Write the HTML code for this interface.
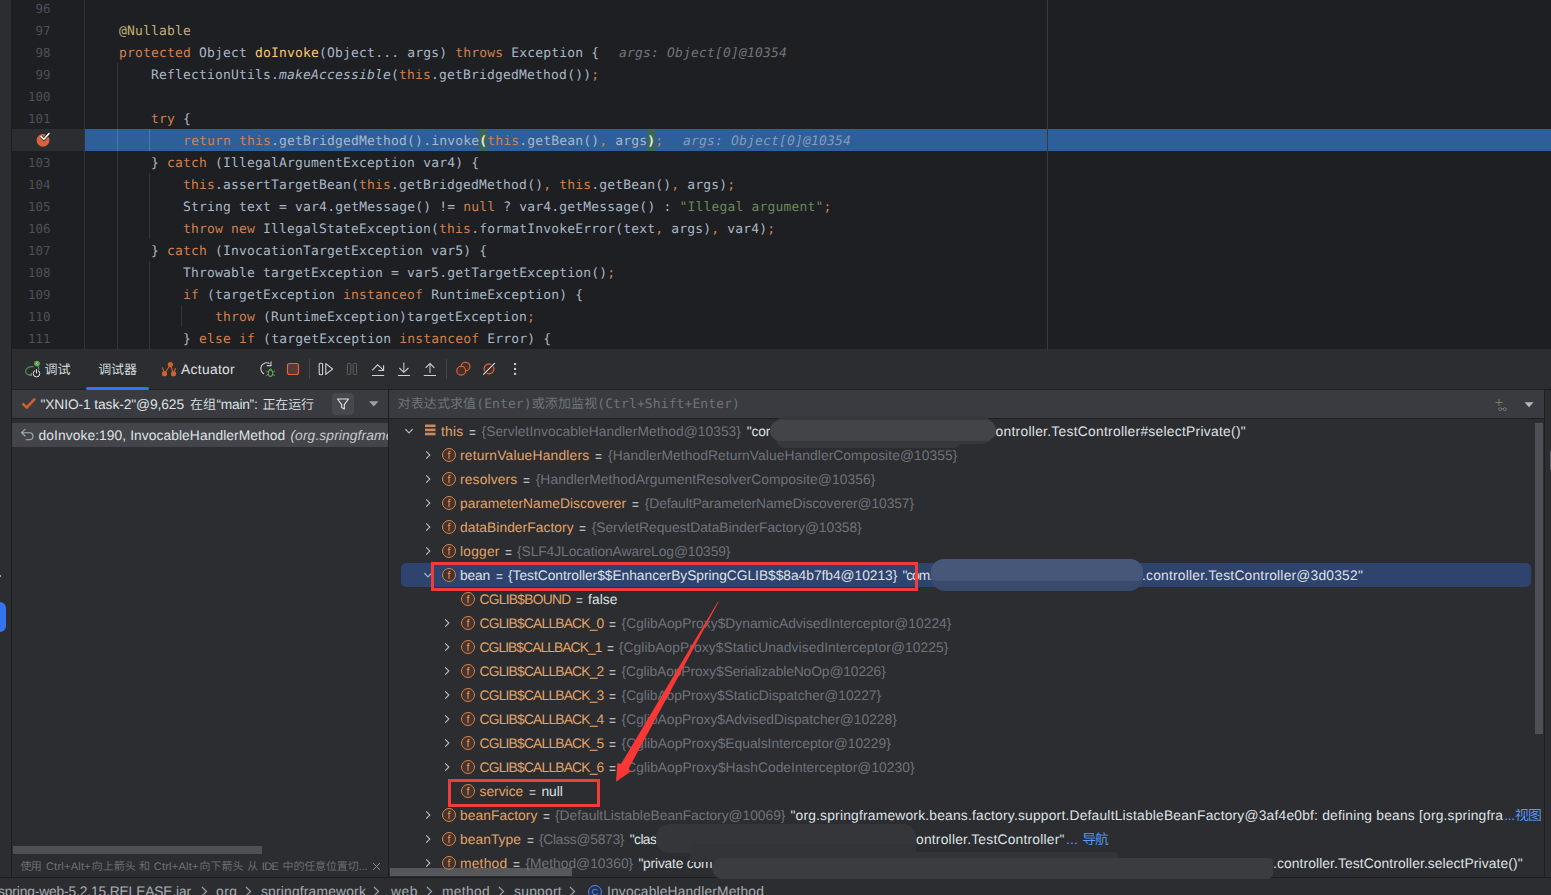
<!DOCTYPE html><html><head><meta charset=utf-8><title>debug</title><style>
html,body{margin:0;padding:0}
body{width:1551px;height:895px;overflow:hidden;background:#2b2d30;position:relative;font-family:'Liberation Sans','Noto Sans CJK SC',sans-serif;}
#editor{position:absolute;left:11px;top:0;width:1540px;height:349px;background:#1e1f22;overflow:hidden}
#editor>*{margin-left:-11px}
.cl{position:absolute;left:87px;height:22px;line-height:22px;margin-top:1.8px;white-space:pre;font-family:'DejaVu Sans Mono','Liberation Mono','Noto Sans CJK SC',monospace;font-size:13px;letter-spacing:0.1738px;text-rendering:geometricPrecision}
.ln{position:absolute;left:12px;width:38.6px;text-align:right;height:22px;line-height:22px;margin-top:0.8px;font-family:'DejaVu Sans Mono','Liberation Mono','Noto Sans CJK SC',monospace;font-size:12.5px;text-rendering:geometricPrecision;color:#4b5059}
.t{position:absolute;white-space:pre;text-rendering:geometricPrecision}
svg{overflow:visible}
</style></head><body>
<div id=editor>
<div style='position:absolute;left:12px;top:129px;width:72px;height:22px;background:#2b2d30'></div>
<div style='position:absolute;left:85px;top:129px;width:1466px;height:22px;background:#2d5f9a'></div>
<div style='position:absolute;left:479px;top:129px;width:8px;height:22px;background:#3b6852'></div>
<div style='position:absolute;left:647px;top:129px;width:8px;height:22px;background:#3b6852'></div>
<div style='position:absolute;left:84px;top:0;width:1px;height:349px;background:#313438'></div>
<div style='position:absolute;left:1047px;top:0;width:1px;height:349px;background:#393b40'></div>
<div style='position:absolute;left:117px;top:63px;width:1px;height:66px;background:#313438'></div>
<div style='position:absolute;left:117px;top:151px;width:1px;height:220px;background:#313438'></div>
<div style='position:absolute;left:117px;top:129px;width:1px;height:22px;background:#4d78ab'></div>
<div style='position:absolute;left:149px;top:129px;width:1px;height:22px;background:#4d78ab'></div>
<div style='position:absolute;left:149px;top:173px;width:1px;height:66px;background:#313438'></div>
<div style='position:absolute;left:149px;top:261px;width:1px;height:110px;background:#313438'></div>
<div style='position:absolute;left:181px;top:305px;width:1px;height:22px;background:#313438'></div>
<div class=ln style='top:-3px'>96</div>
<div class=ln style='top:19px'>97</div>
<div class=ln style='top:41px'>98</div>
<div class=ln style='top:63px'>99</div>
<div class=ln style='top:85px'>100</div>
<div class=ln style='top:107px'>101</div>
<div class=ln style='top:151px'>103</div>
<div class=ln style='top:173px'>104</div>
<div class=ln style='top:195px'>105</div>
<div class=ln style='top:217px'>106</div>
<div class=ln style='top:239px'>107</div>
<div class=ln style='top:261px'>108</div>
<div class=ln style='top:283px'>109</div>
<div class=ln style='top:305px'>110</div>
<div class=ln style='top:327px'>111</div>
<svg style='position:absolute;left:34px;top:130px' width=20 height=20 viewBox='0 0 20 20'><circle cx=9 cy=10.3 r=6.4 fill='#d9633c'/><path d='M7.2 6.6 L9.9 9.2 L15 3.6' fill=none stroke='#2b2d30' stroke-width=3.2 /><path d='M7.2 6.6 L9.9 9.2 L15 3.6' fill=none stroke='#fff' stroke-width=1.5 stroke-linecap=round stroke-linejoin=round /></svg>
<div class=cl style='top:19px'><span style='color:#a9b7c6;'>    </span><span style='color:#c0b070;'>@Nullable</span></div>
<div class=cl style='top:41px'><span style='color:#a9b7c6;'>    </span><span style='color:#d2804b;'>protected</span><span style='color:#a9b7c6;'> </span><span style='color:#a9b7c6;'>Object</span><span style='color:#a9b7c6;'> </span><span style='color:#ffc66d;'>doInvoke</span><span style='color:#a9b7c6;'>(</span><span style='color:#a9b7c6;'>Object</span><span style='color:#a9b7c6;'>.</span><span style='color:#a9b7c6;'>.</span><span style='color:#a9b7c6;'>.</span><span style='color:#a9b7c6;'> </span><span style='color:#a9b7c6;'>args</span><span style='color:#a9b7c6;'>)</span><span style='color:#a9b7c6;'> </span><span style='color:#d2804b;'>throws</span><span style='color:#a9b7c6;'> </span><span style='color:#a9b7c6;'>Exception</span><span style='color:#a9b7c6;'> </span><span style='color:#a9b7c6;'>{</span></div>
<div class=cl style='top:63px'><span style='color:#a9b7c6;'>        </span><span style='color:#a9b7c6;'>ReflectionUtils</span><span style='color:#a9b7c6;'>.</span><span style='color:#a9b7c6;font-style:italic;'>makeAccessible</span><span style='color:#a9b7c6;'>(</span><span style='color:#d2804b;'>this</span><span style='color:#a9b7c6;'>.</span><span style='color:#a9b7c6;'>getBridgedMethod</span><span style='color:#a9b7c6;'>(</span><span style='color:#a9b7c6;'>)</span><span style='color:#a9b7c6;'>)</span><span style='color:#d2804b;'>;</span></div>
<div class=cl style='top:107px'><span style='color:#a9b7c6;'>        </span><span style='color:#d2804b;'>try</span><span style='color:#a9b7c6;'> </span><span style='color:#a9b7c6;'>{</span></div>
<div class=cl style='top:129px'><span style='color:#a9b7c6;'>            </span><span style='color:#d2804b;'>return</span><span style='color:#a9b7c6;'> </span><span style='color:#d2804b;'>this</span><span style='color:#a9b7c6;'>.</span><span style='color:#a9b7c6;'>getBridgedMethod</span><span style='color:#a9b7c6;'>(</span><span style='color:#a9b7c6;'>)</span><span style='color:#a9b7c6;'>.</span><span style='color:#a9b7c6;'>invoke</span><span style='color:#e6e8ec;font-weight:bold;'>(</span><span style='color:#d2804b;'>this</span><span style='color:#a9b7c6;'>.</span><span style='color:#a9b7c6;'>getBean</span><span style='color:#a9b7c6;'>(</span><span style='color:#a9b7c6;'>)</span><span style='color:#d2804b;'>,</span><span style='color:#a9b7c6;'> </span><span style='color:#a9b7c6;'>args</span><span style='color:#e6e8ec;font-weight:bold;'>)</span><span style='color:#d2804b;'>;</span></div>
<div class=cl style='top:151px'><span style='color:#a9b7c6;'>        </span><span style='color:#a9b7c6;'>}</span><span style='color:#a9b7c6;'> </span><span style='color:#d2804b;'>catch</span><span style='color:#a9b7c6;'> </span><span style='color:#a9b7c6;'>(</span><span style='color:#a9b7c6;'>IllegalArgumentException</span><span style='color:#a9b7c6;'> </span><span style='color:#a9b7c6;'>var4</span><span style='color:#a9b7c6;'>)</span><span style='color:#a9b7c6;'> </span><span style='color:#a9b7c6;'>{</span></div>
<div class=cl style='top:173px'><span style='color:#a9b7c6;'>            </span><span style='color:#d2804b;'>this</span><span style='color:#a9b7c6;'>.</span><span style='color:#a9b7c6;'>assertTargetBean</span><span style='color:#a9b7c6;'>(</span><span style='color:#d2804b;'>this</span><span style='color:#a9b7c6;'>.</span><span style='color:#a9b7c6;'>getBridgedMethod</span><span style='color:#a9b7c6;'>(</span><span style='color:#a9b7c6;'>)</span><span style='color:#d2804b;'>,</span><span style='color:#a9b7c6;'> </span><span style='color:#d2804b;'>this</span><span style='color:#a9b7c6;'>.</span><span style='color:#a9b7c6;'>getBean</span><span style='color:#a9b7c6;'>(</span><span style='color:#a9b7c6;'>)</span><span style='color:#d2804b;'>,</span><span style='color:#a9b7c6;'> </span><span style='color:#a9b7c6;'>args</span><span style='color:#a9b7c6;'>)</span><span style='color:#d2804b;'>;</span></div>
<div class=cl style='top:195px'><span style='color:#a9b7c6;'>            </span><span style='color:#a9b7c6;'>String</span><span style='color:#a9b7c6;'> </span><span style='color:#a9b7c6;'>text</span><span style='color:#a9b7c6;'> </span><span style='color:#a9b7c6;'>=</span><span style='color:#a9b7c6;'> </span><span style='color:#a9b7c6;'>var4</span><span style='color:#a9b7c6;'>.</span><span style='color:#a9b7c6;'>getMessage</span><span style='color:#a9b7c6;'>(</span><span style='color:#a9b7c6;'>)</span><span style='color:#a9b7c6;'> </span><span style='color:#a9b7c6;'>!</span><span style='color:#a9b7c6;'>=</span><span style='color:#a9b7c6;'> </span><span style='color:#d2804b;'>null</span><span style='color:#a9b7c6;'> </span><span style='color:#a9b7c6;'>?</span><span style='color:#a9b7c6;'> </span><span style='color:#a9b7c6;'>var4</span><span style='color:#a9b7c6;'>.</span><span style='color:#a9b7c6;'>getMessage</span><span style='color:#a9b7c6;'>(</span><span style='color:#a9b7c6;'>)</span><span style='color:#a9b7c6;'> </span><span style='color:#a9b7c6;'>:</span><span style='color:#a9b7c6;'> </span><span style='color:#6a8759;'>"Illegal argument"</span><span style='color:#d2804b;'>;</span></div>
<div class=cl style='top:217px'><span style='color:#a9b7c6;'>            </span><span style='color:#d2804b;'>throw</span><span style='color:#a9b7c6;'> </span><span style='color:#d2804b;'>new</span><span style='color:#a9b7c6;'> </span><span style='color:#a9b7c6;'>IllegalStateException</span><span style='color:#a9b7c6;'>(</span><span style='color:#d2804b;'>this</span><span style='color:#a9b7c6;'>.</span><span style='color:#a9b7c6;'>formatInvokeError</span><span style='color:#a9b7c6;'>(</span><span style='color:#a9b7c6;'>text</span><span style='color:#d2804b;'>,</span><span style='color:#a9b7c6;'> </span><span style='color:#a9b7c6;'>args</span><span style='color:#a9b7c6;'>)</span><span style='color:#d2804b;'>,</span><span style='color:#a9b7c6;'> </span><span style='color:#a9b7c6;'>var4</span><span style='color:#a9b7c6;'>)</span><span style='color:#d2804b;'>;</span></div>
<div class=cl style='top:239px'><span style='color:#a9b7c6;'>        </span><span style='color:#a9b7c6;'>}</span><span style='color:#a9b7c6;'> </span><span style='color:#d2804b;'>catch</span><span style='color:#a9b7c6;'> </span><span style='color:#a9b7c6;'>(</span><span style='color:#a9b7c6;'>InvocationTargetException</span><span style='color:#a9b7c6;'> </span><span style='color:#a9b7c6;'>var5</span><span style='color:#a9b7c6;'>)</span><span style='color:#a9b7c6;'> </span><span style='color:#a9b7c6;'>{</span></div>
<div class=cl style='top:261px'><span style='color:#a9b7c6;'>            </span><span style='color:#a9b7c6;'>Throwable</span><span style='color:#a9b7c6;'> </span><span style='color:#a9b7c6;'>targetException</span><span style='color:#a9b7c6;'> </span><span style='color:#a9b7c6;'>=</span><span style='color:#a9b7c6;'> </span><span style='color:#a9b7c6;'>var5</span><span style='color:#a9b7c6;'>.</span><span style='color:#a9b7c6;'>getTargetException</span><span style='color:#a9b7c6;'>(</span><span style='color:#a9b7c6;'>)</span><span style='color:#d2804b;'>;</span></div>
<div class=cl style='top:283px'><span style='color:#a9b7c6;'>            </span><span style='color:#d2804b;'>if</span><span style='color:#a9b7c6;'> </span><span style='color:#a9b7c6;'>(</span><span style='color:#a9b7c6;'>targetException</span><span style='color:#a9b7c6;'> </span><span style='color:#d2804b;'>instanceof</span><span style='color:#a9b7c6;'> </span><span style='color:#a9b7c6;'>RuntimeException</span><span style='color:#a9b7c6;'>)</span><span style='color:#a9b7c6;'> </span><span style='color:#a9b7c6;'>{</span></div>
<div class=cl style='top:305px'><span style='color:#a9b7c6;'>                </span><span style='color:#d2804b;'>throw</span><span style='color:#a9b7c6;'> </span><span style='color:#a9b7c6;'>(</span><span style='color:#a9b7c6;'>RuntimeException</span><span style='color:#a9b7c6;'>)</span><span style='color:#a9b7c6;'>targetException</span><span style='color:#d2804b;'>;</span></div>
<div class=cl style='top:327px'><span style='color:#a9b7c6;'>            </span><span style='color:#a9b7c6;'>}</span><span style='color:#a9b7c6;'> </span><span style='color:#d2804b;'>else</span><span style='color:#a9b7c6;'> </span><span style='color:#d2804b;'>if</span><span style='color:#a9b7c6;'> </span><span style='color:#a9b7c6;'>(</span><span style='color:#a9b7c6;'>targetException</span><span style='color:#a9b7c6;'> </span><span style='color:#d2804b;'>instanceof</span><span style='color:#a9b7c6;'> </span><span style='color:#a9b7c6;'>Error</span><span style='color:#a9b7c6;'>)</span><span style='color:#a9b7c6;'> </span><span style='color:#a9b7c6;'>{</span></div>
<div class=cl style='top:41px;left:619px;color:#70747c;font-style:italic'>args: Object[0]@10354</div>
<div class=cl style='top:129px;left:683px;color:#879bb8;font-style:italic'>args: Object[0]@10354</div>
</div>
<div style='position:absolute;left:12px;top:349px;width:1539px;height:40px;background:#2b2d30'></div>
<div style='position:absolute;left:12px;top:389px;width:1539px;height:1px;background:#1e1f22'></div>
<div style='position:absolute;left:86px;top:387px;width:63px;height:3px;border-radius:2px;background:#3574f0'></div>
<span class=t style="left:44.4px;top:359.7px;line-height:20px;font-size:13px;color:#dfe1e5;font-family:'Liberation Sans','Noto Sans CJK SC',sans-serif;font-weight:350;letter-spacing:0.092px">调试</span>
<span class=t style="left:98.2px;top:359.7px;line-height:20px;font-size:13px;color:#dfe1e5;font-family:'Liberation Sans','Noto Sans CJK SC',sans-serif;font-weight:350;letter-spacing:-0.139px">调试器</span>
<span class=t style="left:181.0px;top:359.7px;line-height:20px;font-size:13.8px;color:#dfe1e5;font-family:'Liberation Sans','Noto Sans CJK SC',sans-serif;letter-spacing:0.326px">Actuator</span>
<div style='position:absolute;left:12px;top:390px;width:376px;height:28px;background:#393b40'></div>
<div style='position:absolute;left:389px;top:390px;width:1155px;height:28px;background:#393b40'></div>
<div style='position:absolute;left:12px;top:418px;width:1533px;height:1px;background:#1e1f22'></div>
<div style='position:absolute;left:388px;top:390px;width:1px;height:487px;background:#1e1f22'></div>
<div style='position:absolute;left:1544px;top:390px;width:1px;height:487px;background:#1e1f22'></div>
<div style='position:absolute;left:11px;top:349px;width:1px;height:528px;background:#1e1f22'></div>
<div style='position:absolute;left:332px;top:393px;width:22px;height:22px;border-radius:4px;background:#46484d'></div>
<svg style='position:absolute;left:335px;top:396px' width=16 height=16 viewBox='0 0 16 16'><path d='M2.5 3 H13.5 L9.3 8.6 V13 L6.7 11.6 V8.6 Z' fill=none stroke='#dfe1e5' stroke-width=1.1 stroke-linejoin=round /></svg>
<svg style='position:absolute;left:368px;top:400px' width=12 height=8 viewBox='0 0 12 8'><path d='M1 1.2 H10.5 L5.75 6.5Z' fill='#9da0a8'/></svg>
<svg style='position:absolute;left:0;top:0' width=60 height=460 viewBox='0 0 60 460'><path d='M22.5 403.5 L26.8 407.4 L35 398.6' fill=none stroke='#d35f2a' stroke-width=2.5 stroke-linejoin=miter /></svg>
<span class=t style="left:40.4px;top:394.7px;line-height:20px;font-size:13.8px;color:#dfe1e5;font-family:'Liberation Sans','Noto Sans CJK SC',sans-serif;letter-spacing:-0.102px">"XNIO-1 task-2"@9,625</span>
<span class=t style="left:190.0px;top:394.7px;line-height:20px;font-size:13px;color:#dfe1e5;font-family:'Liberation Sans','Noto Sans CJK SC',sans-serif;font-weight:350;letter-spacing:-0.008px">在组</span>
<span class=t style="left:216.5px;top:394.7px;line-height:20px;font-size:13.8px;color:#dfe1e5;font-family:'Liberation Sans','Noto Sans CJK SC',sans-serif;letter-spacing:-0.277px">“main”:</span>
<span class=t style="left:262.5px;top:394.7px;line-height:20px;font-size:13px;color:#dfe1e5;font-family:'Liberation Sans','Noto Sans CJK SC',sans-serif;font-weight:350;letter-spacing:-0.129px">正在运行</span>
<div style='position:absolute;left:12px;top:423px;width:376px;height:24px;background:#43454a'></div>
<svg style='position:absolute;left:0;top:0' width=60 height=460 viewBox='0 0 60 460'><path d='M25 429.4 L21.5 432.7 L25 436 M21.8 432.7 H29.4 A3.55 3.55 0 0 1 29.4 439.8 H26.2' fill=none stroke='#a3b2ba' stroke-width=1.1 stroke-linecap=round stroke-linejoin=round /></svg>
<span class=t style="left:38.6px;top:425.7px;line-height:20px;font-size:13.8px;color:#dfe1e5;font-family:'Liberation Sans','Noto Sans CJK SC',sans-serif;letter-spacing:0.074px">doInvoke:190, InvocableHandlerMethod</span>
<div style='position:absolute;left:286px;top:423px;width:102px;height:24px;overflow:hidden'><span class=t style="left:4.4px;top:2.7px;line-height:20px;font-size:13.8px;color:#c8cbd2;font-family:'Liberation Sans','Noto Sans CJK SC',sans-serif;font-style:italic;letter-spacing:0.115px">(org.springframework.</span></div>
<div style='position:absolute;left:13px;top:846px;width:249px;height:8px;background:#4e5056'></div>
<span class=t style="left:20.4px;top:857.0px;line-height:20px;font-size:11px;color:#6f737a;font-family:'Liberation Sans','Noto Sans CJK SC',sans-serif;font-weight:350;letter-spacing:-0.700px">使用</span>
<span class=t style="left:45.9px;top:857.0px;line-height:20px;font-size:11px;color:#6f737a;font-family:'Liberation Sans','Noto Sans CJK SC',sans-serif;letter-spacing:0.256px">Ctrl+Alt+</span>
<span class=t style="left:91.8px;top:857.0px;line-height:20px;font-size:11px;color:#6f737a;font-family:'Liberation Sans','Noto Sans CJK SC',sans-serif;font-weight:350;letter-spacing:-0.050px">向上箭头</span>
<span class=t style="left:139.0px;top:857.0px;line-height:20px;font-size:11px;color:#6f737a;font-family:'Liberation Sans','Noto Sans CJK SC',sans-serif;font-weight:350;letter-spacing:-0.600px">和</span>
<span class=t style="left:153.7px;top:857.0px;line-height:20px;font-size:11px;color:#6f737a;font-family:'Liberation Sans','Noto Sans CJK SC',sans-serif;letter-spacing:0.256px">Ctrl+Alt+</span>
<span class=t style="left:199.6px;top:857.0px;line-height:20px;font-size:11px;color:#6f737a;font-family:'Liberation Sans','Noto Sans CJK SC',sans-serif;font-weight:350;letter-spacing:-0.050px">向下箭头</span>
<span class=t style="left:247.3px;top:857.0px;line-height:20px;font-size:11px;color:#6f737a;font-family:'Liberation Sans','Noto Sans CJK SC',sans-serif;font-weight:350;letter-spacing:-0.700px">从</span>
<span class=t style="left:261.8px;top:857.0px;line-height:20px;font-size:11px;color:#6f737a;font-family:'Liberation Sans','Noto Sans CJK SC',sans-serif;letter-spacing:-0.648px">IDE</span>
<span class=t style="left:282.6px;top:857.0px;line-height:20px;font-size:11px;color:#6f737a;font-family:'Liberation Sans','Noto Sans CJK SC',sans-serif;font-weight:350;letter-spacing:-0.157px">中的任意位置切</span>
<span class=t style="left:358.8px;top:857.0px;line-height:20px;font-size:11px;color:#6f737a;font-family:'Liberation Sans','Noto Sans CJK SC',sans-serif;letter-spacing:-0.157px">...</span>
<svg style='position:absolute;left:371px;top:861px' width=11 height=11 viewBox='0 0 11 11'><path d='M2 2 L9 9 M9 2 L2 9' stroke='#868a91' stroke-width=1 fill=none /></svg>
<span class=t style="left:397.6px;top:394.7px;line-height:20px;font-size:13px;color:#6f737a;font-family:'DejaVu Sans Mono','Liberation Mono','Noto Sans CJK SC',monospace;letter-spacing:0.104px">对表达式求值(Enter)或添加监视(Ctrl+Shift+Enter)</span>
<svg style='position:absolute;left:1523px;top:401px' width=12 height=8 viewBox='0 0 12 8'><path d='M1.5 1.2 H10.5 L6 6.2Z' fill='#b4b8bf'/></svg>
<svg style='position:absolute;left:1493px;top:397.3px' width=16 height=18 viewBox='0 0 16 18'><path d='M6 2 V9 M2.5 5.5 H9.5' stroke='#7d7a66' stroke-width=1 fill=none /><circle cx=7.2 cy=12.2 r=1.5 fill=none stroke='#7d7f85' stroke-width=.8 /><circle cx=11.8 cy=12.2 r=1.5 fill=none stroke='#7d7f85' stroke-width=.8 /><path d='M8.7 11.8H10.3' stroke='#7d7f85' stroke-width=.8/></svg>
<svg style="position:absolute;left:12px;top:349px" width="520" height="40" viewBox="12 349 520 40" fill="none">
<!-- debug tab icon -->
<path d="M33.6 366.6 C29 366.2 25.6 368.4 25.6 371.2 C25.6 373.8 28 375.2 31.6 375" stroke="#4f8f55" stroke-width="1.2"/>
<path d="M28.6 375.4 L32 372.6 V376 Z" fill="#57965c"/>
<circle cx="37" cy="363.6" r="2.9" fill="#5fa04e"/>
<path d="M37.8 362.2 L36.2 363.6 L37.8 365" stroke="#d8ead2" stroke-width=".7"/>
<path d="M38.6 366.6 V369.6" stroke="#57965c" stroke-width="1.2"/>
<circle cx="36.5" cy="373.6" r="3.3" stroke="#dfe1e5" stroke-width="1" fill="#2b2d30"/>
<path d="M36.5 369 V373.4" stroke="#2b2d30" stroke-width="3"/>
<path d="M36.5 369.2 V373.4" stroke="#dfe1e5" stroke-width="1.1"/>
<!-- actuator icon -->
<path d="M164.5 373.7 L170.4 364.6 L173.5 373.7 M164.5 373.7 L162.4 367.4 M173.5 373.7 L175.6 368.2" stroke="#d0602c" stroke-width="1.1"/>
<circle cx="170.4" cy="364.6" r="2.6" fill="#d0602c"/><circle cx="164.5" cy="373.7" r="2.6" fill="#d0602c"/><circle cx="173.5" cy="373.7" r="2.6" fill="#d0602c"/>
<!-- rerun debug -->
<path d="M269.6 363.4 A5 5 0 1 0 264 373.9" stroke="#ced0d6" stroke-width="1.1"/>
<path d="M271 361.6 V365.6 H266.8" stroke="#ced0d6" stroke-width="1.1"/>
<ellipse cx="270.5" cy="373.2" rx="2.2" ry="3.2" stroke="#57a64a" stroke-width="1.1"/>
<path d="M269 370 L270.5 368.6 L272 370 M268.2 372.2 L266.2 371 M268.2 374.4 L266.2 375.6 M272.8 372.2 L274.8 371 M272.8 374.4 L274.8 375.6" stroke="#57a64a" stroke-width="1"/>
<!-- stop -->
<rect x="287.5" y="363.5" width="11" height="11" rx="2" fill="#5c3a2e" stroke="#e0693b" stroke-width="1.1"/>
<path d="M309.5 359 V379" stroke="#43454a" stroke-width="1"/>
<!-- resume -->
<rect x="319.2" y="363.3" width="3.4" height="11.4" rx="1" stroke="#ced0d6" stroke-width="1.1"/>
<path d="M325.8 363.6 L332.6 369 L325.8 374.4 Z" stroke="#ced0d6" stroke-width="1.1" stroke-linejoin="round"/>
<!-- pause (disabled) -->
<rect x="347.4" y="363.4" width="3.4" height="11.2" rx="1" stroke="#6b6759" stroke-width=".9"/>
<rect x="353.2" y="363.4" width="3.4" height="11.2" rx="1" stroke="#6b6759" stroke-width=".9"/>
<!-- step over -->
<path d="M372.2 370.4 L377.6 364.8 L383.4 370.2 M383.6 365.2 V370.5 H378.4 M372 375.5 H384.2" stroke="#ced0d6" stroke-width="1.1"/>
<!-- step into -->
<path d="M403.8 362.4 V372" stroke="#a0a2a8" stroke-width="1.4"/>
<path d="M399.4 368 L403.8 372.3 L408.4 368 M398 375.5 H410" stroke="#ced0d6" stroke-width="1.1"/>
<!-- step out -->
<path d="M430 364 V373" stroke="#a0a2a8" stroke-width="1.4"/>
<path d="M425.6 367.8 L430 363.5 L434.4 367.8 M423.8 375.5 H436" stroke="#ced0d6" stroke-width="1.1"/>
<path d="M446.5 359 V379" stroke="#43454a" stroke-width="1"/>
<!-- view breakpoints -->
<circle cx="465.5" cy="366.6" r="4.4" fill="#4a2e28" stroke="#e0693b" stroke-width="1.1"/>
<circle cx="461.2" cy="370.7" r="4.4" fill="#4a2e28" stroke="#e0693b" stroke-width="1.1"/>
<!-- mute breakpoints -->
<circle cx="489" cy="368.9" r="5" fill="#4a2e28" stroke="#e0693b" stroke-width="1.1"/>
<path d="M483.2 374.7 L494.8 363.1" stroke="#2b2d30" stroke-width="3"/>
<path d="M483.2 374.7 L494.8 363.1" stroke="#dfe1e5" stroke-width="1.1"/>
<!-- more -->
<rect x="514" y="363" width="2.1" height="2.1" fill="#b9cdd1"/><rect x="514" y="367.9" width="2.1" height="2.1" fill="#b9cdd1"/><rect x="514" y="372.8" width="2.1" height="2.1" fill="#b9cdd1"/>
</svg>

<div style='position:absolute;left:0;top:877px;width:1551px;height:18px;background:#2b2d30;border-top:1px solid #1e1f22;box-sizing:border-box'></div>
<span class=t style="left:-2.0px;top:882.4px;line-height:20px;font-size:13.8px;color:#a8adb5;font-family:'Liberation Sans','Noto Sans CJK SC',sans-serif;letter-spacing:-0.141px">spring-web-5.2.15.RELEASE.jar</span>
<span class=t style="left:216.0px;top:882.4px;line-height:20px;font-size:13.8px;color:#a8adb5;font-family:'Liberation Sans','Noto Sans CJK SC',sans-serif;letter-spacing:0.516px">org</span>
<span class=t style="left:261.0px;top:882.4px;line-height:20px;font-size:13.8px;color:#a8adb5;font-family:'Liberation Sans','Noto Sans CJK SC',sans-serif;letter-spacing:0.201px">springframework</span>
<span class=t style="left:391.0px;top:882.4px;line-height:20px;font-size:13.8px;color:#a8adb5;font-family:'Liberation Sans','Noto Sans CJK SC',sans-serif;letter-spacing:0.562px">web</span>
<span class=t style="left:442.0px;top:882.4px;line-height:20px;font-size:13.8px;color:#a8adb5;font-family:'Liberation Sans','Noto Sans CJK SC',sans-serif;letter-spacing:0.328px">method</span>
<span class=t style="left:514.0px;top:882.4px;line-height:20px;font-size:13.8px;color:#a8adb5;font-family:'Liberation Sans','Noto Sans CJK SC',sans-serif;letter-spacing:0.281px">support</span>
<span class=t style="left:607.0px;top:882.4px;line-height:20px;font-size:13.8px;color:#a8adb5;font-family:'Liberation Sans','Noto Sans CJK SC',sans-serif;letter-spacing:0.163px">InvocableHandlerMethod</span>
<svg style='position:absolute;left:199px;top:884.8px' width=10 height=12 viewBox='0 0 10 12'><path d='M3 2 L7.5 6.5 L3 11' fill=none stroke='#9da0a8' stroke-width=1.2 /></svg>
<svg style='position:absolute;left:243px;top:884.8px' width=10 height=12 viewBox='0 0 10 12'><path d='M3 2 L7.5 6.5 L3 11' fill=none stroke='#9da0a8' stroke-width=1.2 /></svg>
<svg style='position:absolute;left:371px;top:884.8px' width=10 height=12 viewBox='0 0 10 12'><path d='M3 2 L7.5 6.5 L3 11' fill=none stroke='#9da0a8' stroke-width=1.2 /></svg>
<svg style='position:absolute;left:424px;top:884.8px' width=10 height=12 viewBox='0 0 10 12'><path d='M3 2 L7.5 6.5 L3 11' fill=none stroke='#9da0a8' stroke-width=1.2 /></svg>
<svg style='position:absolute;left:496px;top:884.8px' width=10 height=12 viewBox='0 0 10 12'><path d='M3 2 L7.5 6.5 L3 11' fill=none stroke='#9da0a8' stroke-width=1.2 /></svg>
<svg style='position:absolute;left:567px;top:884.8px' width=10 height=12 viewBox='0 0 10 12'><path d='M3 2 L7.5 6.5 L3 11' fill=none stroke='#9da0a8' stroke-width=1.2 /></svg>
<svg style='position:absolute;left:587px;top:884.2px' width=16 height=16 viewBox='0 0 16 16'><circle cx=8 cy=8 r=6.5 fill='#25324d' stroke='#548af7' stroke-width=1 /><text x=8 y=11.4 text-anchor=middle font-family="'Liberation Sans',sans-serif" font-size=9.5 fill='#548af7'>C</text></svg>
<div style='position:absolute;left:401px;top:563px;width:1130px;height:24px;border-radius:5px;background:#2e436e'></div>
<svg style='position:absolute;left:401.0px;top:423.0px' width=16 height=16 viewBox='0 0 16 16'><path d='M2.5 5.5 L8 11 L13.5 5.5' fill=none stroke='#b0b3ba' stroke-width=2 stroke-linecap=round stroke-linejoin=round transform='translate(3.2 3.2) scale(0.6)'/></svg>
<svg style='position:absolute;left:424.6px;top:424.0px' width=11 height=13 viewBox='0 0 11 13'><rect x=0 y=.5 width=10.5 height=2.6 fill='#c98b5e'/><rect x=0 y=4.6 width=10.5 height=2.6 fill='#c98b5e'/><rect x=0 y=8.7 width=10.5 height=2.6 fill='#c98b5e'/></svg>
<span class=t style="left:441.0px;top:421.7px;line-height:20px;font-size:13.8px;color:#e2a36a;font-family:'Liberation Sans','Noto Sans CJK SC',sans-serif;letter-spacing:0.254px">this</span>
<span class=t style="left:468.9px;top:422.6px;line-height:20px;font-size:13.8px;color:#d3d5da;font-family:'Liberation Sans','Noto Sans CJK SC',sans-serif;transform:scaleX(.86);transform-origin:0 0;letter-spacing:0.000px">=</span>
<span class=t style="left:481.5px;top:421.7px;line-height:20px;font-size:13.8px;color:#6f737a;font-family:'Liberation Sans','Noto Sans CJK SC',sans-serif;letter-spacing:0.042px">{ServletInvocableHandlerMethod@10353}</span>
<span class=t style="left:746.7px;top:421.7px;line-height:20px;font-size:13.8px;color:#dfe1e5;font-family:'Liberation Sans','Noto Sans CJK SC',sans-serif;letter-spacing:-0.095px">"cor</span>
<span class=t style="left:995.6px;top:421.7px;line-height:20px;font-size:13.8px;color:#dfe1e5;font-family:'Liberation Sans','Noto Sans CJK SC',sans-serif;letter-spacing:0.283px">ontroller.TestController#selectPrivate()"</span>
<svg style='position:absolute;left:419.6px;top:447.0px' width=16 height=16 viewBox='0 0 16 16'><path d='M5.5 2.5 L11 8 L5.5 13.5' fill=none stroke='#b0b3ba' stroke-width=2 stroke-linecap=round stroke-linejoin=round transform='translate(3.2 3.2) scale(0.6)'/></svg>
<svg style='position:absolute;left:441.0px;top:447.0px' width=16 height=16 viewBox='0 0 16 16'><circle cx=8 cy=8 r=6.5 fill='#45322b' stroke='#d4864a' stroke-width=1 /><text x=8 y=11.6 text-anchor=middle font-family="'Liberation Sans',sans-serif" font-size=10.5 fill='#e0956a'>f</text></svg>
<span class=t style="left:460.0px;top:445.7px;line-height:20px;font-size:13.8px;color:#e2a36a;font-family:'Liberation Sans','Noto Sans CJK SC',sans-serif;letter-spacing:0.198px">returnValueHandlers</span>
<span class=t style="left:595.2px;top:446.6px;line-height:20px;font-size:13.8px;color:#d3d5da;font-family:'Liberation Sans','Noto Sans CJK SC',sans-serif;transform:scaleX(.86);transform-origin:0 0;letter-spacing:0.000px">=</span>
<span class=t style="left:608.0px;top:445.7px;line-height:20px;font-size:13.8px;color:#6f737a;font-family:'Liberation Sans','Noto Sans CJK SC',sans-serif;letter-spacing:0.074px">{HandlerMethodReturnValueHandlerComposite@10355}</span>
<svg style='position:absolute;left:419.6px;top:471.0px' width=16 height=16 viewBox='0 0 16 16'><path d='M5.5 2.5 L11 8 L5.5 13.5' fill=none stroke='#b0b3ba' stroke-width=2 stroke-linecap=round stroke-linejoin=round transform='translate(3.2 3.2) scale(0.6)'/></svg>
<svg style='position:absolute;left:441.0px;top:471.0px' width=16 height=16 viewBox='0 0 16 16'><circle cx=8 cy=8 r=6.5 fill='#45322b' stroke='#d4864a' stroke-width=1 /><text x=8 y=11.6 text-anchor=middle font-family="'Liberation Sans',sans-serif" font-size=10.5 fill='#e0956a'>f</text></svg>
<span class=t style="left:460.0px;top:469.7px;line-height:20px;font-size:13.8px;color:#e2a36a;font-family:'Liberation Sans','Noto Sans CJK SC',sans-serif;letter-spacing:0.157px">resolvers</span>
<span class=t style="left:523.2px;top:470.6px;line-height:20px;font-size:13.8px;color:#d3d5da;font-family:'Liberation Sans','Noto Sans CJK SC',sans-serif;transform:scaleX(.86);transform-origin:0 0;letter-spacing:0.000px">=</span>
<span class=t style="left:535.7px;top:469.7px;line-height:20px;font-size:13.8px;color:#6f737a;font-family:'Liberation Sans','Noto Sans CJK SC',sans-serif;letter-spacing:0.078px">{HandlerMethodArgumentResolverComposite@10356}</span>
<svg style='position:absolute;left:419.6px;top:495.0px' width=16 height=16 viewBox='0 0 16 16'><path d='M5.5 2.5 L11 8 L5.5 13.5' fill=none stroke='#b0b3ba' stroke-width=2 stroke-linecap=round stroke-linejoin=round transform='translate(3.2 3.2) scale(0.6)'/></svg>
<svg style='position:absolute;left:441.0px;top:495.0px' width=16 height=16 viewBox='0 0 16 16'><circle cx=8 cy=8 r=6.5 fill='#45322b' stroke='#d4864a' stroke-width=1 /><text x=8 y=11.6 text-anchor=middle font-family="'Liberation Sans',sans-serif" font-size=10.5 fill='#e0956a'>f</text></svg>
<span class=t style="left:460.0px;top:493.7px;line-height:20px;font-size:13.8px;color:#e2a36a;font-family:'Liberation Sans','Noto Sans CJK SC',sans-serif;letter-spacing:0.025px">parameterNameDiscoverer</span>
<span class=t style="left:632.2px;top:494.6px;line-height:20px;font-size:13.8px;color:#d3d5da;font-family:'Liberation Sans','Noto Sans CJK SC',sans-serif;transform:scaleX(.86);transform-origin:0 0;letter-spacing:0.000px">=</span>
<span class=t style="left:644.8px;top:493.7px;line-height:20px;font-size:13.8px;color:#6f737a;font-family:'Liberation Sans','Noto Sans CJK SC',sans-serif;letter-spacing:-0.086px">{DefaultParameterNameDiscoverer@10357}</span>
<svg style='position:absolute;left:419.6px;top:519.0px' width=16 height=16 viewBox='0 0 16 16'><path d='M5.5 2.5 L11 8 L5.5 13.5' fill=none stroke='#b0b3ba' stroke-width=2 stroke-linecap=round stroke-linejoin=round transform='translate(3.2 3.2) scale(0.6)'/></svg>
<svg style='position:absolute;left:441.0px;top:519.0px' width=16 height=16 viewBox='0 0 16 16'><circle cx=8 cy=8 r=6.5 fill='#45322b' stroke='#d4864a' stroke-width=1 /><text x=8 y=11.6 text-anchor=middle font-family="'Liberation Sans',sans-serif" font-size=10.5 fill='#e0956a'>f</text></svg>
<span class=t style="left:460.0px;top:517.7px;line-height:20px;font-size:13.8px;color:#e2a36a;font-family:'Liberation Sans','Noto Sans CJK SC',sans-serif;letter-spacing:0.051px">dataBinderFactory</span>
<span class=t style="left:579.2px;top:518.6px;line-height:20px;font-size:13.8px;color:#d3d5da;font-family:'Liberation Sans','Noto Sans CJK SC',sans-serif;transform:scaleX(.86);transform-origin:0 0;letter-spacing:0.000px">=</span>
<span class=t style="left:591.7px;top:517.7px;line-height:20px;font-size:13.8px;color:#6f737a;font-family:'Liberation Sans','Noto Sans CJK SC',sans-serif;letter-spacing:-0.024px">{ServletRequestDataBinderFactory@10358}</span>
<svg style='position:absolute;left:419.6px;top:543.0px' width=16 height=16 viewBox='0 0 16 16'><path d='M5.5 2.5 L11 8 L5.5 13.5' fill=none stroke='#b0b3ba' stroke-width=2 stroke-linecap=round stroke-linejoin=round transform='translate(3.2 3.2) scale(0.6)'/></svg>
<svg style='position:absolute;left:441.0px;top:543.0px' width=16 height=16 viewBox='0 0 16 16'><circle cx=8 cy=8 r=6.5 fill='#45322b' stroke='#d4864a' stroke-width=1 /><text x=8 y=11.6 text-anchor=middle font-family="'Liberation Sans',sans-serif" font-size=10.5 fill='#e0956a'>f</text></svg>
<span class=t style="left:460.0px;top:541.7px;line-height:20px;font-size:13.8px;color:#e2a36a;font-family:'Liberation Sans','Noto Sans CJK SC',sans-serif;letter-spacing:0.207px">logger</span>
<span class=t style="left:505.2px;top:542.6px;line-height:20px;font-size:13.8px;color:#d3d5da;font-family:'Liberation Sans','Noto Sans CJK SC',sans-serif;transform:scaleX(.86);transform-origin:0 0;letter-spacing:0.000px">=</span>
<span class=t style="left:517.0px;top:541.7px;line-height:20px;font-size:13.8px;color:#6f737a;font-family:'Liberation Sans','Noto Sans CJK SC',sans-serif;letter-spacing:-0.073px">{SLF4JLocationAwareLog@10359}</span>
<svg style='position:absolute;left:419.6px;top:567.0px' width=16 height=16 viewBox='0 0 16 16'><path d='M2.5 5.5 L8 11 L13.5 5.5' fill=none stroke='#b0b3ba' stroke-width=2 stroke-linecap=round stroke-linejoin=round transform='translate(3.2 3.2) scale(0.6)'/></svg>
<svg style='position:absolute;left:441.0px;top:567.0px' width=16 height=16 viewBox='0 0 16 16'><circle cx=8 cy=8 r=6.5 fill='#45322b' stroke='#d4864a' stroke-width=1 /><text x=8 y=11.6 text-anchor=middle font-family="'Liberation Sans',sans-serif" font-size=10.5 fill='#e0956a'>f</text></svg>
<span class=t style="left:460.0px;top:565.7px;line-height:20px;font-size:13.8px;color:#dfe1e5;font-family:'Liberation Sans','Noto Sans CJK SC',sans-serif;letter-spacing:-0.176px">bean</span>
<span class=t style="left:495.7px;top:566.6px;line-height:20px;font-size:13.8px;color:#dfe1e5;font-family:'Liberation Sans','Noto Sans CJK SC',sans-serif;transform:scaleX(.86);transform-origin:0 0;letter-spacing:0.000px">=</span>
<span class=t style="left:508.0px;top:565.7px;line-height:20px;font-size:13.8px;color:#dfe1e5;font-family:'Liberation Sans','Noto Sans CJK SC',sans-serif;letter-spacing:-0.038px">{TestController$$EnhancerBySpringCGLIB$$8a4b7fb4@10213}</span>
<span class=t style="left:902.4px;top:565.7px;line-height:20px;font-size:13.8px;color:#dfe1e5;font-family:'Liberation Sans','Noto Sans CJK SC',sans-serif;letter-spacing:-1.039px">"com.</span>
<span class=t style="left:1142.0px;top:565.7px;line-height:20px;font-size:13.8px;color:#dfe1e5;font-family:'Liberation Sans','Noto Sans CJK SC',sans-serif;letter-spacing:0.215px">.controller.TestController@3d0352"</span>
<svg style='position:absolute;left:460.0px;top:591.0px' width=16 height=16 viewBox='0 0 16 16'><circle cx=8 cy=8 r=6.5 fill='#45322b' stroke='#d4864a' stroke-width=1 /><text x=8 y=11.6 text-anchor=middle font-family="'Liberation Sans',sans-serif" font-size=10.5 fill='#e0956a'>f</text></svg>
<span class=t style="left:479.5px;top:589.7px;line-height:20px;font-size:13.8px;color:#e2a36a;font-family:'Liberation Sans','Noto Sans CJK SC',sans-serif;letter-spacing:-0.719px">CGLIB$BOUND</span>
<span class=t style="left:576.2px;top:590.6px;line-height:20px;font-size:13.8px;color:#d3d5da;font-family:'Liberation Sans','Noto Sans CJK SC',sans-serif;transform:scaleX(.86);transform-origin:0 0;letter-spacing:0.000px">=</span>
<span class=t style="left:588.0px;top:589.7px;line-height:20px;font-size:13.8px;color:#dfe1e5;font-family:'Liberation Sans','Noto Sans CJK SC',sans-serif;letter-spacing:0.069px">false</span>
<svg style='position:absolute;left:438.7px;top:615.0px' width=16 height=16 viewBox='0 0 16 16'><path d='M5.5 2.5 L11 8 L5.5 13.5' fill=none stroke='#b0b3ba' stroke-width=2 stroke-linecap=round stroke-linejoin=round transform='translate(3.2 3.2) scale(0.6)'/></svg>
<svg style='position:absolute;left:460.0px;top:615.0px' width=16 height=16 viewBox='0 0 16 16'><circle cx=8 cy=8 r=6.5 fill='#45322b' stroke='#d4864a' stroke-width=1 /><text x=8 y=11.6 text-anchor=middle font-family="'Liberation Sans',sans-serif" font-size=10.5 fill='#e0956a'>f</text></svg>
<span class=t style="left:479.5px;top:613.7px;line-height:20px;font-size:13.8px;color:#e2a36a;font-family:'Liberation Sans','Noto Sans CJK SC',sans-serif;letter-spacing:-0.782px">CGLIB$CALLBACK_0</span>
<span class=t style="left:609.2px;top:614.6px;line-height:20px;font-size:13.8px;color:#d3d5da;font-family:'Liberation Sans','Noto Sans CJK SC',sans-serif;transform:scaleX(.86);transform-origin:0 0;letter-spacing:0.000px">=</span>
<span class=t style="left:621.6px;top:613.7px;line-height:20px;font-size:13.8px;color:#6f737a;font-family:'Liberation Sans','Noto Sans CJK SC',sans-serif;letter-spacing:0.012px">{CglibAopProxy$DynamicAdvisedInterceptor@10224}</span>
<svg style='position:absolute;left:438.7px;top:639.0px' width=16 height=16 viewBox='0 0 16 16'><path d='M5.5 2.5 L11 8 L5.5 13.5' fill=none stroke='#b0b3ba' stroke-width=2 stroke-linecap=round stroke-linejoin=round transform='translate(3.2 3.2) scale(0.6)'/></svg>
<svg style='position:absolute;left:460.0px;top:639.0px' width=16 height=16 viewBox='0 0 16 16'><circle cx=8 cy=8 r=6.5 fill='#45322b' stroke='#d4864a' stroke-width=1 /><text x=8 y=11.6 text-anchor=middle font-family="'Liberation Sans',sans-serif" font-size=10.5 fill='#e0956a'>f</text></svg>
<span class=t style="left:479.5px;top:637.7px;line-height:20px;font-size:13.8px;color:#e2a36a;font-family:'Liberation Sans','Noto Sans CJK SC',sans-serif;letter-spacing:-0.907px">CGLIB$CALLBACK_1</span>
<span class=t style="left:607.2px;top:638.6px;line-height:20px;font-size:13.8px;color:#d3d5da;font-family:'Liberation Sans','Noto Sans CJK SC',sans-serif;transform:scaleX(.86);transform-origin:0 0;letter-spacing:0.000px">=</span>
<span class=t style="left:618.8px;top:637.7px;line-height:20px;font-size:13.8px;color:#6f737a;font-family:'Liberation Sans','Noto Sans CJK SC',sans-serif;letter-spacing:0.071px">{CglibAopProxy$StaticUnadvisedInterceptor@10225}</span>
<svg style='position:absolute;left:438.7px;top:663.0px' width=16 height=16 viewBox='0 0 16 16'><path d='M5.5 2.5 L11 8 L5.5 13.5' fill=none stroke='#b0b3ba' stroke-width=2 stroke-linecap=round stroke-linejoin=round transform='translate(3.2 3.2) scale(0.6)'/></svg>
<svg style='position:absolute;left:460.0px;top:663.0px' width=16 height=16 viewBox='0 0 16 16'><circle cx=8 cy=8 r=6.5 fill='#45322b' stroke='#d4864a' stroke-width=1 /><text x=8 y=11.6 text-anchor=middle font-family="'Liberation Sans',sans-serif" font-size=10.5 fill='#e0956a'>f</text></svg>
<span class=t style="left:479.5px;top:661.7px;line-height:20px;font-size:13.8px;color:#e2a36a;font-family:'Liberation Sans','Noto Sans CJK SC',sans-serif;letter-spacing:-0.782px">CGLIB$CALLBACK_2</span>
<span class=t style="left:609.2px;top:662.6px;line-height:20px;font-size:13.8px;color:#d3d5da;font-family:'Liberation Sans','Noto Sans CJK SC',sans-serif;transform:scaleX(.86);transform-origin:0 0;letter-spacing:0.000px">=</span>
<span class=t style="left:621.6px;top:661.7px;line-height:20px;font-size:13.8px;color:#6f737a;font-family:'Liberation Sans','Noto Sans CJK SC',sans-serif;letter-spacing:-0.100px">{CglibAopProxy$SerializableNoOp@10226}</span>
<svg style='position:absolute;left:438.7px;top:687.0px' width=16 height=16 viewBox='0 0 16 16'><path d='M5.5 2.5 L11 8 L5.5 13.5' fill=none stroke='#b0b3ba' stroke-width=2 stroke-linecap=round stroke-linejoin=round transform='translate(3.2 3.2) scale(0.6)'/></svg>
<svg style='position:absolute;left:460.0px;top:687.0px' width=16 height=16 viewBox='0 0 16 16'><circle cx=8 cy=8 r=6.5 fill='#45322b' stroke='#d4864a' stroke-width=1 /><text x=8 y=11.6 text-anchor=middle font-family="'Liberation Sans',sans-serif" font-size=10.5 fill='#e0956a'>f</text></svg>
<span class=t style="left:479.5px;top:685.7px;line-height:20px;font-size:13.8px;color:#e2a36a;font-family:'Liberation Sans','Noto Sans CJK SC',sans-serif;letter-spacing:-0.782px">CGLIB$CALLBACK_3</span>
<span class=t style="left:609.2px;top:686.6px;line-height:20px;font-size:13.8px;color:#d3d5da;font-family:'Liberation Sans','Noto Sans CJK SC',sans-serif;transform:scaleX(.86);transform-origin:0 0;letter-spacing:0.000px">=</span>
<span class=t style="left:621.6px;top:685.7px;line-height:20px;font-size:13.8px;color:#6f737a;font-family:'Liberation Sans','Noto Sans CJK SC',sans-serif;letter-spacing:-0.041px">{CglibAopProxy$StaticDispatcher@10227}</span>
<svg style='position:absolute;left:438.7px;top:711.0px' width=16 height=16 viewBox='0 0 16 16'><path d='M5.5 2.5 L11 8 L5.5 13.5' fill=none stroke='#b0b3ba' stroke-width=2 stroke-linecap=round stroke-linejoin=round transform='translate(3.2 3.2) scale(0.6)'/></svg>
<svg style='position:absolute;left:460.0px;top:711.0px' width=16 height=16 viewBox='0 0 16 16'><circle cx=8 cy=8 r=6.5 fill='#45322b' stroke='#d4864a' stroke-width=1 /><text x=8 y=11.6 text-anchor=middle font-family="'Liberation Sans',sans-serif" font-size=10.5 fill='#e0956a'>f</text></svg>
<span class=t style="left:479.5px;top:709.7px;line-height:20px;font-size:13.8px;color:#e2a36a;font-family:'Liberation Sans','Noto Sans CJK SC',sans-serif;letter-spacing:-0.782px">CGLIB$CALLBACK_4</span>
<span class=t style="left:609.2px;top:710.6px;line-height:20px;font-size:13.8px;color:#d3d5da;font-family:'Liberation Sans','Noto Sans CJK SC',sans-serif;transform:scaleX(.86);transform-origin:0 0;letter-spacing:0.000px">=</span>
<span class=t style="left:621.6px;top:709.7px;line-height:20px;font-size:13.8px;color:#6f737a;font-family:'Liberation Sans','Noto Sans CJK SC',sans-serif;letter-spacing:-0.009px">{CglibAopProxy$AdvisedDispatcher@10228}</span>
<svg style='position:absolute;left:438.7px;top:735.0px' width=16 height=16 viewBox='0 0 16 16'><path d='M5.5 2.5 L11 8 L5.5 13.5' fill=none stroke='#b0b3ba' stroke-width=2 stroke-linecap=round stroke-linejoin=round transform='translate(3.2 3.2) scale(0.6)'/></svg>
<svg style='position:absolute;left:460.0px;top:735.0px' width=16 height=16 viewBox='0 0 16 16'><circle cx=8 cy=8 r=6.5 fill='#45322b' stroke='#d4864a' stroke-width=1 /><text x=8 y=11.6 text-anchor=middle font-family="'Liberation Sans',sans-serif" font-size=10.5 fill='#e0956a'>f</text></svg>
<span class=t style="left:479.5px;top:733.7px;line-height:20px;font-size:13.8px;color:#e2a36a;font-family:'Liberation Sans','Noto Sans CJK SC',sans-serif;letter-spacing:-0.782px">CGLIB$CALLBACK_5</span>
<span class=t style="left:609.2px;top:734.6px;line-height:20px;font-size:13.8px;color:#d3d5da;font-family:'Liberation Sans','Noto Sans CJK SC',sans-serif;transform:scaleX(.86);transform-origin:0 0;letter-spacing:0.000px">=</span>
<span class=t style="left:621.6px;top:733.7px;line-height:20px;font-size:13.8px;color:#6f737a;font-family:'Liberation Sans','Noto Sans CJK SC',sans-serif;letter-spacing:0.014px">{CglibAopProxy$EqualsInterceptor@10229}</span>
<svg style='position:absolute;left:438.7px;top:759.0px' width=16 height=16 viewBox='0 0 16 16'><path d='M5.5 2.5 L11 8 L5.5 13.5' fill=none stroke='#b0b3ba' stroke-width=2 stroke-linecap=round stroke-linejoin=round transform='translate(3.2 3.2) scale(0.6)'/></svg>
<svg style='position:absolute;left:460.0px;top:759.0px' width=16 height=16 viewBox='0 0 16 16'><circle cx=8 cy=8 r=6.5 fill='#45322b' stroke='#d4864a' stroke-width=1 /><text x=8 y=11.6 text-anchor=middle font-family="'Liberation Sans',sans-serif" font-size=10.5 fill='#e0956a'>f</text></svg>
<span class=t style="left:479.5px;top:757.7px;line-height:20px;font-size:13.8px;color:#e2a36a;font-family:'Liberation Sans','Noto Sans CJK SC',sans-serif;letter-spacing:-0.782px">CGLIB$CALLBACK_6</span>
<span class=t style="left:609.2px;top:758.6px;line-height:20px;font-size:13.8px;color:#d3d5da;font-family:'Liberation Sans','Noto Sans CJK SC',sans-serif;transform:scaleX(.86);transform-origin:0 0;letter-spacing:0.000px">=</span>
<span class=t style="left:621.6px;top:757.7px;line-height:20px;font-size:13.8px;color:#6f737a;font-family:'Liberation Sans','Noto Sans CJK SC',sans-serif;letter-spacing:0.032px">{CglibAopProxy$HashCodeInterceptor@10230}</span>
<svg style='position:absolute;left:460.0px;top:783.0px' width=16 height=16 viewBox='0 0 16 16'><circle cx=8 cy=8 r=6.5 fill='#45322b' stroke='#d4864a' stroke-width=1 /><text x=8 y=11.6 text-anchor=middle font-family="'Liberation Sans',sans-serif" font-size=10.5 fill='#e0956a'>f</text></svg>
<span class=t style="left:479.5px;top:781.7px;line-height:20px;font-size:13.8px;color:#e2a36a;font-family:'Liberation Sans','Noto Sans CJK SC',sans-serif;letter-spacing:0.014px">service</span>
<span class=t style="left:529.2px;top:782.6px;line-height:20px;font-size:13.8px;color:#d3d5da;font-family:'Liberation Sans','Noto Sans CJK SC',sans-serif;transform:scaleX(.86);transform-origin:0 0;letter-spacing:0.000px">=</span>
<span class=t style="left:541.4px;top:781.7px;line-height:20px;font-size:13.8px;color:#dfe1e5;font-family:'Liberation Sans','Noto Sans CJK SC',sans-serif;letter-spacing:-0.021px">null</span>
<svg style='position:absolute;left:419.6px;top:807.0px' width=16 height=16 viewBox='0 0 16 16'><path d='M5.5 2.5 L11 8 L5.5 13.5' fill=none stroke='#b0b3ba' stroke-width=2 stroke-linecap=round stroke-linejoin=round transform='translate(3.2 3.2) scale(0.6)'/></svg>
<svg style='position:absolute;left:441.0px;top:807.0px' width=16 height=16 viewBox='0 0 16 16'><circle cx=8 cy=8 r=6.5 fill='#45322b' stroke='#d4864a' stroke-width=1 /><text x=8 y=11.6 text-anchor=middle font-family="'Liberation Sans',sans-serif" font-size=10.5 fill='#e0956a'>f</text></svg>
<span class=t style="left:460.0px;top:805.7px;line-height:20px;font-size:13.8px;color:#e2a36a;font-family:'Liberation Sans','Noto Sans CJK SC',sans-serif;letter-spacing:0.072px">beanFactory</span>
<span class=t style="left:543.2px;top:806.6px;line-height:20px;font-size:13.8px;color:#d3d5da;font-family:'Liberation Sans','Noto Sans CJK SC',sans-serif;transform:scaleX(.86);transform-origin:0 0;letter-spacing:0.000px">=</span>
<span class=t style="left:555.0px;top:805.7px;line-height:20px;font-size:13.8px;color:#6f737a;font-family:'Liberation Sans','Noto Sans CJK SC',sans-serif;letter-spacing:-0.020px">{DefaultListableBeanFactory@10069}</span>
<span class=t style="left:790.4px;top:805.7px;line-height:20px;font-size:13.8px;color:#dfe1e5;font-family:'Liberation Sans','Noto Sans CJK SC',sans-serif;letter-spacing:0.212px">"org.springframework.beans.factory.support.DefaultListableBeanFactory@3af4e0bf: defining beans [org.springfra</span>
<span class=t style="left:1504.3px;top:805.7px;line-height:20px;font-size:13.8px;color:#5a9cf8;font-family:'Liberation Sans','Noto Sans CJK SC',sans-serif;letter-spacing:-0.400px">...</span>
<span class=t style="left:1515.0px;top:805.7px;line-height:20px;font-size:13.8px;color:#5a9cf8;font-family:'Liberation Sans','Noto Sans CJK SC',sans-serif;font-weight:350;letter-spacing:-0.797px">视图</span>
<svg style='position:absolute;left:419.6px;top:831.0px' width=16 height=16 viewBox='0 0 16 16'><path d='M5.5 2.5 L11 8 L5.5 13.5' fill=none stroke='#b0b3ba' stroke-width=2 stroke-linecap=round stroke-linejoin=round transform='translate(3.2 3.2) scale(0.6)'/></svg>
<svg style='position:absolute;left:441.0px;top:831.0px' width=16 height=16 viewBox='0 0 16 16'><circle cx=8 cy=8 r=6.5 fill='#45322b' stroke='#d4864a' stroke-width=1 /><text x=8 y=11.6 text-anchor=middle font-family="'Liberation Sans',sans-serif" font-size=10.5 fill='#e0956a'>f</text></svg>
<span class=t style="left:460.0px;top:829.7px;line-height:20px;font-size:13.8px;color:#e2a36a;font-family:'Liberation Sans','Noto Sans CJK SC',sans-serif;letter-spacing:0.049px">beanType</span>
<span class=t style="left:526.7px;top:830.6px;line-height:20px;font-size:13.8px;color:#d3d5da;font-family:'Liberation Sans','Noto Sans CJK SC',sans-serif;transform:scaleX(.86);transform-origin:0 0;letter-spacing:0.000px">=</span>
<span class=t style="left:539.0px;top:829.7px;line-height:20px;font-size:13.8px;color:#6f737a;font-family:'Liberation Sans','Noto Sans CJK SC',sans-serif;letter-spacing:-0.268px">{Class@5873}</span>
<span class=t style="left:629.8px;top:829.7px;line-height:20px;font-size:13.8px;color:#dfe1e5;font-family:'Liberation Sans','Noto Sans CJK SC',sans-serif;letter-spacing:-0.607px">"clas</span>
<span class=t style="left:916.0px;top:829.7px;line-height:20px;font-size:13.8px;color:#dfe1e5;font-family:'Liberation Sans','Noto Sans CJK SC',sans-serif;letter-spacing:0.231px">ontroller.TestController"</span>
<span class=t style="left:1066.0px;top:829.7px;line-height:20px;font-size:13.8px;color:#5a9cf8;font-family:'Liberation Sans','Noto Sans CJK SC',sans-serif;letter-spacing:0.167px">...</span>
<span class=t style="left:1082.2px;top:829.7px;line-height:20px;font-size:13.8px;color:#5a9cf8;font-family:'Liberation Sans','Noto Sans CJK SC',sans-serif;font-weight:350;letter-spacing:-0.997px">导航</span>
<svg style='position:absolute;left:419.6px;top:855.0px' width=16 height=16 viewBox='0 0 16 16'><path d='M5.5 2.5 L11 8 L5.5 13.5' fill=none stroke='#b0b3ba' stroke-width=2 stroke-linecap=round stroke-linejoin=round transform='translate(3.2 3.2) scale(0.6)'/></svg>
<svg style='position:absolute;left:441.0px;top:855.0px' width=16 height=16 viewBox='0 0 16 16'><circle cx=8 cy=8 r=6.5 fill='#45322b' stroke='#d4864a' stroke-width=1 /><text x=8 y=11.6 text-anchor=middle font-family="'Liberation Sans',sans-serif" font-size=10.5 fill='#e0956a'>f</text></svg>
<span class=t style="left:460.0px;top:853.7px;line-height:20px;font-size:13.8px;color:#e2a36a;font-family:'Liberation Sans','Noto Sans CJK SC',sans-serif;letter-spacing:0.211px">method</span>
<span class=t style="left:512.6px;top:854.6px;line-height:20px;font-size:13.8px;color:#d3d5da;font-family:'Liberation Sans','Noto Sans CJK SC',sans-serif;transform:scaleX(.86);transform-origin:0 0;letter-spacing:0.000px">=</span>
<span class=t style="left:525.4px;top:853.7px;line-height:20px;font-size:13.8px;color:#6f737a;font-family:'Liberation Sans','Noto Sans CJK SC',sans-serif;letter-spacing:0.014px">{Method@10360}</span>
<span class=t style="left:638.4px;top:853.7px;line-height:20px;font-size:13.8px;color:#dfe1e5;font-family:'Liberation Sans','Noto Sans CJK SC',sans-serif;letter-spacing:-0.185px">"private com</span>
<span class=t style="left:1273.0px;top:853.7px;line-height:20px;font-size:13.8px;color:#dfe1e5;font-family:'Liberation Sans','Noto Sans CJK SC',sans-serif;letter-spacing:0.111px">.controller.TestController.selectPrivate()"</span>
<div style='position:absolute;left:774px;top:416px;width:220px;height:28px;border-radius:13px;background:#36383c'></div>
<div style='position:absolute;left:776px;top:430px;width:186px;height:18px;border-radius:10px;background:#36383c'></div>
<div style='position:absolute;left:770px;top:420px;width:226px;height:20.5px;border-radius:10px;background:#424449'></div>
<div style='position:absolute;left:931px;top:559px;width:212px;height:32px;border-radius:14px;background:#3a4a6c'></div>
<div style='position:absolute;left:931px;top:559px;width:212px;height:22px;border-radius:13px 13px 6px 6px;background:#46577a'></div>
<div style='position:absolute;left:656px;top:824px;width:260px;height:29px;border-radius:13px;background:#34363a'></div>
<div style='position:absolute;left:690px;top:844px;width:226px;height:18px;border-radius:0 0 10px 0;background:#323437'></div>
<div style='position:absolute;left:700px;top:852px;width:418px;height:9px;border-radius:4px;background:#323437'></div>
<div style='position:absolute;left:712px;top:858px;width:561px;height:21px;border-radius:10px 4px 6px 12px;background:#3b3c40'></div>
<div style='position:absolute;left:431px;top:562px;width:481px;height:23px;border:3px solid #f23c3c'></div>
<div style='position:absolute;left:448px;top:778.5px;width:146px;height:22px;border:3px solid #f23c3c'></div>
<svg style='position:absolute;left:600px;top:595px' width=130 height=195 viewBox='600 595 130 195'><path d='M718 601.5 L621 764 L617.4 762.9 L616 781.7 L630.8 771.4 L628.6 768.7 L718.6 602 Z' fill='#f93737'/></svg>
<div style='position:absolute;left:1535px;top:423px;width:8px;height:311px;background:#4e5056'></div>
<div style='position:absolute;left:390px;top:868px;width:182px;height:8px;background:rgba(120,122,128,.55)'></div>
<div style='position:absolute;left:1550px;top:451px;width:1px;height:19px;background:#5a5d63'></div>
<div style='position:absolute;left:-6px;top:602px;width:12px;height:30px;border-radius:6px;background:#3574f0'></div>
<div style='position:absolute;left:0;top:575px;width:1px;height:2px;background:#9da0a8'></div>
</body></html>
